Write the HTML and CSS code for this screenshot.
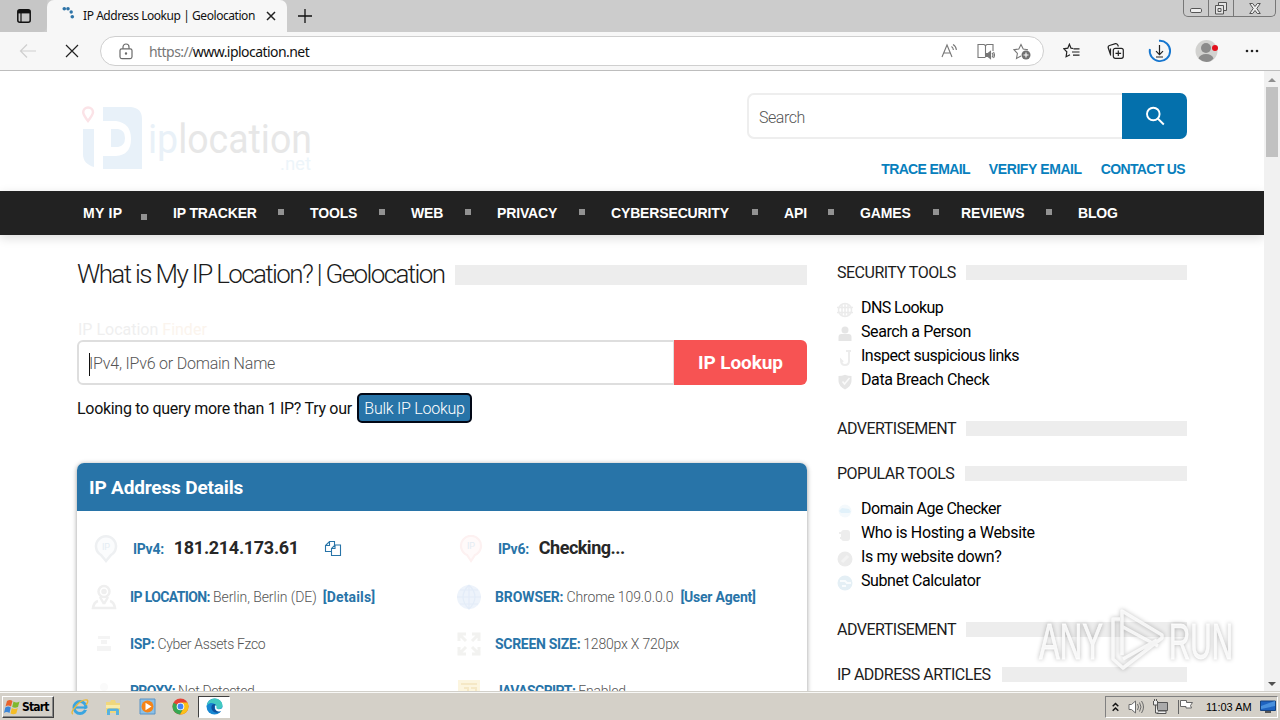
FILE: index.html
```html
<!DOCTYPE html>
<html lang="en">
<head>
<meta charset="utf-8">
<title>IP Address Lookup | Geolocation</title>
<link rel="stylesheet" href="styles.css">
</head>
<body>
<div class="tabbar">
  <div class="tab-actions"><svg width="16" height="16" viewBox="0 0 16 16"><rect x="1.8" y="1.8" width="12.4" height="12.4" rx="2" fill="none" stroke="#111" stroke-width="1.5"/><path d="M2 2h12v3.4H2z" fill="#111"/><path d="M5 5v9" stroke="#111" stroke-width="1.2"/></svg></div>
  <div class="tab">
    <svg class="spinner" width="14" height="14" viewBox="0 0 14 14" fill="#2e74a8"><circle cx="2.3" cy="1.8" r="1.8"/><circle cx="6" cy="1.8" r="1.8"/><circle cx="9.2" cy="5" r="1.7"/><circle cx="10.3" cy="9.8" r="1.8"/></svg>
    <span class="tab-title">IP Address Lookup | Geolocation</span>
    <svg class="tab-close" width="10" height="10" viewBox="0 0 10 10"><path d="M1 1l8 8M9 1L1 9" stroke="#222" stroke-width="1.5"/></svg>
  </div>
  <svg class="new-tab" width="14" height="14" viewBox="0 0 14 14"><path d="M7 0v14M0 7h14" stroke="#111" stroke-width="1.3"/></svg>
  <div class="window-buttons">
    <span class="wb wb-min"><svg width="12" height="5" viewBox="0 0 12 5"><rect x=".5" y=".5" width="11" height="4" rx="1.3" fill="#eee" stroke="#555"/></svg></span>
    <span class="wb wb-max"><svg width="14" height="13" viewBox="0 0 14 13" fill="#e4e4e4" stroke="#555"><path d="M4.5.5h8v8h-8z"/><path d="M1.500 3.500h8v8.500h-8z"/><path d="M4 6.500h3v3H4z"/></svg></span>
    <span class="wb wb-close"><svg width="12" height="11" viewBox="0 0 12 11"><path d="M.7.5h3L6 3.500 8.300.5h3L7.800 5.500l3.500 5h-3L6 7.500l-2.300 3h-3l3.500-5z" fill="#eee" stroke="#555"/></svg></span>
  </div>
</div>
<div class="toolbar">
  <svg class="back" width="18" height="16" viewBox="0 0 18 16"><path d="M17 8H1.500M8 1.500L1.500 8 8 14.500" fill="none" stroke="#cfcfcf" stroke-width="1.2"/></svg>
  <svg class="stop" width="14" height="14" viewBox="0 0 14 14"><path d="M1 1l12 12M13 1L1 13" stroke="#222" stroke-width="1.2"/></svg>
  <div class="address">
    <svg class="lock" width="14" height="17" viewBox="0 0 14 17" fill="none" stroke="#6a6a6a" stroke-width="1.2"><rect x="1" y="5.800" width="12" height="9.800" rx="1.800"/><path d="M4 5.800V4a3 3 0 0 1 6 0v1.800"/><circle cx="7" cy="10.500" r=".6" fill="#555"/></svg>
    <span class="url"><span class="scheme">https://</span>www.iplocation.net</span>
    <svg class="read" width="17" height="16" viewBox="0 0 17 16" fill="none" stroke="#777" stroke-width="1.100"><path d="M1 14L6 2l5 12M2.800 10h6.500M10.500 3.500c1.200.8 1.800 2 1.900 3.500M12 1.500c2 1.100 3.200 3 3.400 5.500"/></svg>
    <svg class="book" width="18" height="17" viewBox="0 0 18 17" fill="none" stroke="#777" stroke-width="1.100"><path d="M8.500 14.500H1V1.500h6l1.500 1 1.500-1h6V8M8.500 2.500V14"/><path d="M9.500 10.500h1.500l2.500-2v7l-2.500-2H9.500z" fill="#777"/><path d="M15 10c1 1 1 3 0 4.300M16.500 9c1.200 2 1.200 4.300 0 6"/></svg>
    <svg class="star" width="18" height="17" viewBox="0 0 18 17" fill="none" stroke="#777" stroke-width="1.100"><path d="M8 13l-4.500 2.400.9-4.900L1 6.700l4.800-.7L8 1.500 10.200 6l4.800.7"/><circle cx="13" cy="12" r="4.500" fill="#707070" stroke="none"/><path d="M13 9.500v5M10.500 12h5" stroke="#fff"/></svg>
  </div>
  <svg class="fav" width="18" height="16" viewBox="0 0 18 16" fill="none" stroke="#222" stroke-width="1.200"><path d="M10.200 5.500L8 5.200 6.400 1.200 4.800 5.200.8 5.800l3 3-.7 5 3.900-2M10.500 5.800h6M9 9h7.500M10 12.200h6.500"/></svg>
  <svg class="coll" width="18" height="17" viewBox="0 0 18 17" fill="none" stroke="#222" stroke-width="1.200"><rect x="6.300" y="5.300" width="10" height="10" rx="2"/><path d="M11.300 7.500v5.600M8.500 10.300h5.600M3.800 12.500L1.200 4.800Q.8 3 2.500 2.500l6-1.800Q10 .5 10.800 2l.6 1.500M3.500 11V5.500"/></svg>
  <svg class="down" width="24" height="24" viewBox="0 0 24 24" fill="none"><path d="M11 1.800A10.200 10.200 0 1 1 1.900 10" stroke="#1676cf" stroke-width="1.900"/><path d="M11.500 6v9.500M8 12.200l3.500 3.500 3.500-3.500M8 18h7" stroke="#222" stroke-width="1.200"/></svg>
  <svg class="avatar" width="24" height="24" viewBox="0 0 24 24"><circle cx="11.500" cy="12" r="11" fill="#d2d2d0"/><circle cx="11" cy="9" r="5" fill="#8b8b8b"/><path d="M3.500 19.500Q5 15 11 15t7.500 4.500Q15.500 23 11.500 23t-8-3.500z" fill="#8b8b8b"/><circle cx="20" cy="9" r="3" fill="#e3101c"/></svg>
  <svg class="dots" width="14" height="4" viewBox="0 0 14 4" fill="#222"><circle cx="2" cy="2" r="1.300"/><circle cx="7" cy="2" r="1.300"/><circle cx="12" cy="2" r="1.300"/></svg>
</div>
<div class="viewport">
  <div class="page">
    <header class="site-header">
      <svg class="logo" width="236" height="70" viewBox="0 0 236 70">
        <path d="M9 16C5.500 11.500 4.200 9.500 4.200 7.300a4.900 4.900 0 0 1 9.800 0C14 9.500 12.500 11.500 9 16z" fill="none" stroke="#fbe3e7" stroke-width="2.500"/>
        <path d="M4 24h11v38C8 60 4 56 4 49z" fill="#e8f1f9"/>
        <path d="M24 2h28q11 1 11 12v50H24V51h13q15-1 15-17T37 16H24z" fill="#e8f1f9"/>
        <path d="M32 24h7q7 1 7 9t-7 9h-7z" fill="#e8f1f9"/>
        <text x="69" y="48" class="logo-text" textLength="164" lengthAdjust="spacingAndGlyphs"><tspan fill="#e9f1f8">ip</tspan>location</text>
        <text x="201" y="65" class="logo-net" textLength="31" lengthAdjust="spacingAndGlyphs">.net</text>
      </svg>
      <div class="header-right">
        <div class="search"><span class="search-input">Search</span><span class="search-button"><svg width="20" height="20" viewBox="0 0 20 20" fill="none" stroke="#fff" stroke-width="1.900"><circle cx="8.300" cy="8" r="6.300"/><path d="M12.800 12.500l6 6"/></svg></span></div>
        <div class="top-links"><a>TRACE EMAIL</a><a class="verify">VERIFY EMAIL</a><a>CONTACT US</a></div>
      </div>
    </header>
    <ul class="nav">
      <li class="low">MY IP</li><li>IP TRACKER</li><li>TOOLS</li><li>WEB</li><li>PRIVACY</li><li>CYBERSECURITY</li><li>API</li><li class="near">GAMES</li><li>REVIEWS</li><li class="last">BLOG</li>
    </ul>
    <div class="columns">
      <main>
        <h1><span>What is My IP Location? | Geolocation</span></h1>
        <div class="finder-label">IP Location <span>Finder</span></div>
        <div class="finder"><span class="finder-input">IPv4, IPv6 or Domain Name</span><span class="finder-button">IP Lookup</span></div>
        <div class="bulk"><span class="bulk-text">Looking to query more than 1 IP? Try our</span><a class="bulk-button">Bulk IP Lookup</a></div>
        <section class="card">
          <h2>IP Address Details</h2>
          <div class="details">
            <div class="row first">
              <svg class="ic" width="26" height="28" viewBox="0 0 26 28"><path d="M13 26l-5-6a10 10 0 1 1 10 0z" fill="#fbfcfd" stroke="#eef0f2" stroke-width="2.500"/><text x="13" y="15" text-anchor="middle" class="pin-text">IP</text></svg>
              <b class="v">IPv4:</b><strong class="ipnum">181.214.173.61</strong>
              <svg class="copy" width="18" height="17" viewBox="0 0 18 17" fill="none" stroke="#2874a8" stroke-width="1.100"><path d="M7 11.500H1.500V5.500l4-4h5V5M5.500 1.500v4h-4M7.500 15.500V8.500l3.500-3.500h5.500v10.500zM11 5v3.500H7.500"/></svg>
            </div>
            <div class="row first">
              <svg class="ic" width="26" height="28" viewBox="0 0 26 28"><path d="M13 26l-4-6a10 10 0 1 1 8 0z" fill="#fffafa" stroke="#fdf1f1" stroke-width="2.200"/><text x="13" y="14" text-anchor="middle" class="pin-text">IP</text></svg>
              <b class="v">IPv6:</b><strong class="checking">Checking...</strong>
            </div>
            <div class="row"><svg class="ic" width="26" height="26" viewBox="0 0 26 26" fill="none" stroke="#efefef" stroke-width="2.500"><circle cx="13" cy="7.500" r="5.500"/><circle cx="13" cy="7.500" r="1.500"/><path d="M13 20l-4-7M13 20l4-7M7 17q-4 1-5 7h22q-1-6-5-7"/></svg><b class="iploc">IP LOCATION:</b><span class="val loc">Berlin, Berlin (DE)</span><b class="lnk">[Details]</b></div>
            <div class="row"><svg class="ic" width="26" height="26" viewBox="0 0 26 26"><circle cx="13" cy="13" r="12" fill="#edf3fb"/><path d="M1 13h24M13 1v24M4 6h18M4 20h18M13 1Q1 13 13 25Q25 13 13 1" fill="none" stroke="#e3ecf8" stroke-width="1.200"/></svg><b class="br">BROWSER:</b><span class="val chrome">Chrome 109.0.0.0</span><b class="lnk ua">[User Agent]</b></div>
            <div class="row"><svg class="ic" width="26" height="26" viewBox="0 0 26 26" fill="#f4f4f4"><path d="M7 5h12v3H7zM10 9h6v4h-6zM6 15h14v5H6z"/></svg><b>ISP:</b><span class="val isp">Cyber Assets Fzco</span></div>
            <div class="row"><svg class="ic" width="26" height="26" viewBox="0 0 26 26" fill="none" stroke="#f2f2f0" stroke-width="3"><path d="M3 10V3h7M3 3l7 7M16 3h7v7M23 3l-7 7M3 16v7h7M3 23l7-7M23 16v7h-7M23 23l-7-7"/></svg><b class="ss">SCREEN SIZE:</b><span class="val size">1280px X 720px</span></div>
            <div class="row"><svg class="ic" width="26" height="26" viewBox="0 0 26 26" fill="#fafafa"><circle cx="13" cy="9" r="4"/><path d="M6 14h14v8H6z"/></svg><b class="proxy">PROXY:</b><span class="val isp">Not Detected</span></div>
            <div class="row"><svg class="ic" width="26" height="26" viewBox="0 0 26 26"><path d="M2 2h22v22H2z" fill="#fcf5df"/><path d="M5 6h16M8 10h4v8M15 10h5v4h-5v5h5" fill="none" stroke="#f5e8c6" stroke-width="2"/></svg><b class="iploc">JAVASCRIPT:</b><span class="val">Enabled</span></div>
          </div>
        </section>
      </main>
      <aside>
        <h3 class="s1"><span>SECURITY TOOLS</span></h3>
        <ul class="links">
          <li><svg width="16" height="16" viewBox="0 0 16 16" fill="none" stroke="#ebebeb" stroke-width="1.500"><circle cx="8" cy="8" r="6.500"/><path d="M0 5.500h16M0 10.500h16M8 1v14M5 2v12M11 2v12"/></svg><span class="l1">DNS Lookup</span></li>
          <li><svg width="16" height="16" viewBox="0 0 16 16" fill="#e5e5e5"><circle cx="8" cy="4" r="3.500"/><path d="M1.500 15v-4q0-3 3-3h7q3 0 3 3v4z"/></svg><span class="l2">Search a Person</span></li>
          <li><svg width="16" height="16" viewBox="0 0 16 16" fill="none" stroke="#ececec" stroke-width="2"><path d="M12 1v10q0 4-4 4t-4-5l2 2M9 1h5"/></svg><span class="l3">Inspect suspicious links</span></li>
          <li><svg width="16" height="16" viewBox="0 0 16 16"><path d="M1.500 2Q5 2 8 .8 11 2 14.500 2v5q0 5-6.500 8.500Q1.500 12 1.500 7z" fill="#e5e5e5"/><path d="M5.500 7.500l2 2.500 5-6" fill="none" stroke="#fafafa" stroke-width="1.500"/></svg><span class="l4">Data Breach Check</span></li>
        </ul>
        <h3 class="s2"><span>ADVERTISEMENT</span></h3>
        <h3 class="s3"><span>POPULAR TOOLS</span></h3>
        <ul class="links">
          <li><svg width="16" height="16" viewBox="0 0 16 16"><circle cx="8" cy="8" r="6.500" fill="#f4f9fc"/><path d="M2 8l3-3 7 1 2 3-2 1H4z" fill="#e1f1fa"/></svg><span class="l3">Domain Age Checker</span></li>
          <li><svg width="16" height="16" viewBox="0 0 16 16" fill="#ededed"><rect x="4" y="3" width="9" height="11" rx="3"/><path d="M2 5h4v2H2zM3 10h3v2H3z"/></svg><span class="p2">Who is Hosting a Website</span></li>
          <li><svg width="16" height="16" viewBox="0 0 16 16"><circle cx="8" cy="8" r="7.500" fill="#ebebeb"/><path d="M5 11l6-6" stroke="#f3f3f3" stroke-width="3"/></svg><span class="p3">Is my website down?</span></li>
          <li><svg width="16" height="16" viewBox="0 0 16 16"><circle cx="8" cy="8" r="7.500" fill="#e4eff5"/><path d="M3 6h5l2 2h4M5 11h4" stroke="#f9fcfd" stroke-width="2"/></svg><span class="p4">Subnet Calculator</span></li>
        </ul>
        <h3 class="s4"><span>ADVERTISEMENT</span></h3>
        <h3 class="s5"><span>IP ADDRESS ARTICLES</span></h3>
      </aside>
    </div>
  </div>
  <div class="scrollbar"><span class="up"></span><span class="thumb"></span><span class="dn"></span></div>
  <svg class="watermark" width="204" height="72" viewBox="0 0 204 72">
    <g class="wm">
      <text x="5" y="56" textLength="64" lengthAdjust="spacingAndGlyphs">ANY</text>
      <text x="135" y="56" textLength="64" lengthAdjust="spacingAndGlyphs">RUN</text>
      <path d="M86 16H79V56L89 65 128 35V32L88 8V52M89 24L124 43M89 56L123 37"/>
    </g>
  </svg>
</div>
<div class="taskbar">
  <div class="start"><svg width="17" height="16" viewBox="0 0 17 16"><path d="M3 2q3-2 5.500 0L7 7.500q-3-2-5.500 0z" fill="#e8632c"/><path d="M9.500 2.500q3 1.800 6 0L14 8q-3 1.500-5.800 0z" fill="#7fb82c"/><path d="M1.300 8.500q3-2 5.500 0L5.500 14q-3-2-5.500 0z" fill="#3c86d8"/><path d="M7.800 9q3 1.800 6 0l-1.500 5.500q-3 1.500-5.800 0z" fill="#f5bd26"/></svg>Start</div>
  <svg class="app ie" width="18" height="18" viewBox="0 0 18 18" fill="none"><circle cx="9" cy="9.500" r="6" stroke="#3aa5e0" stroke-width="3"/><path d="M4 9.500h10" stroke="#3aa5e0" stroke-width="2.200"/><path d="M12 12h5v-2z" fill="#d4d0c8"/><path d="M2 16Q-1 15 5 8T16 2q2 1-1 5" stroke="#e9b93c" stroke-width="1.400"/></svg>
  <svg class="app folder" width="18" height="18" viewBox="0 0 18 18"><path d="M2 4h4l1-2h4l1 3h4v10H2z" fill="#f0d77c"/><path d="M2 7h14v3H2z" fill="#f9eba8"/><path d="M3 17v-5q0-1.500 2-1.500h8q2 0 2 1.500v5h-3v-4H6v4z" fill="#58b2df"/></svg>
  <svg class="app wmp" width="17" height="17" viewBox="0 0 17 17"><path d="M1 1h15v15H1z" fill="#8cc0e6" stroke="#5a94c6"/><circle cx="8.500" cy="8.500" r="6" fill="#f58418"/><path d="M6.500 4.800l6 3.700-6 3.700z" fill="#fff"/></svg>
  <svg class="app chromeic" width="17" height="17" viewBox="0 0 17 17"><circle cx="8.500" cy="8.500" r="8" fill="#e54335"/><path d="M8.500 8.500L1.500 4.700A8 8 0 0 0 8 16.500l3.500-6z" fill="#36a852"/><path d="M8.500 4.500h6.900A8 8 0 0 1 8 16.500l3.500-6z" fill="#fbc116"/><circle cx="8.500" cy="8.500" r="3.800" fill="#fff"/><circle cx="8.500" cy="8.500" r="2.900" fill="#4285f4"/></svg>
  <div class="active"><svg width="17" height="17" viewBox="0 0 17 17"><circle cx="8.500" cy="8.500" r="8" fill="#1687d2"/><path d="M.7 8Q2 .7 9 .5q6.500.5 7.500 6.500 0 4-4 4-3 0-2-2Q9 4.500 4.500 5 2 5.500.7 8z" fill="#43c9c1"/><path d="M6 7q-2 4 2 7 4 2 7-1-3 1-5-.5T8.500 8.500q0-2 1.500-2-2-1-4 .5z" fill="#0d4f9c"/><path d="M9 7.500q2 0 1.500 1.800-.6 1.700 2 2 2 0 4.500-1.500l-.5 3q-4 1.500-6 0Q8.500 11 9 7.500z" fill="#fff"/></svg></div>
  <div class="tray">
    <svg class="chev" width="7" height="10" viewBox="0 0 7 10" fill="none" stroke="#111" stroke-width="1.500"><path d="M.7 4.200l2.800-2.700 2.800 2.700M.7 8.700L3.500 6l2.800 2.700"/></svg>
    <svg class="vol" width="17" height="14" viewBox="0 0 17 14" fill="#fff" stroke="#6b6b6b"><path d="M1 4.500h2.500L7.500 1v12L3.500 9.500H1z"/><path d="M9.500 4q2 3 0 6M11.500 2.500q3 4.500 0 9M13.500 1q4 6 0 12" fill="none"/></svg>
    <svg class="net" width="17" height="16" viewBox="0 0 17 16" fill="#eee" stroke="#555"><path d="M5.500 3.500h10v8h-10z" fill="#aaa"/><path d="M7 12h7v2.500H5v-2z"/><path d="M1.500 2v4h4V2M2.500 0v2M4.500 0v2M3.500 6v8h3"/></svg>
    <svg class="flag" width="17" height="15" viewBox="0 0 17 15" fill="#fff" stroke="#666"><path d="M1.500 1v14M3.500 1.500h6v2h6l-2 3 1 2.500H9V7.500H3.500z"/></svg>
    <span class="clock">11:03 AM</span>
    <svg class="desk" width="16" height="14" viewBox="0 0 16 14"><path d="M.5 1h15v9.500H.5z" fill="#1f63c0" stroke="#16437f"/><path d="M1 6l14-5v5L1 9z" fill="#4990dd"/><path d="M5 12h6" stroke="#555" stroke-width="2"/></svg>
  </div>
</div>
</body>
</html>
```
FILE: styles.css
```css
* { box-sizing: border-box; }
body { margin: 0; width: 1280px; height: 720px; overflow: hidden; font-family: Roboto, "Open Sans", sans-serif; background: #fff; color: #222; display: flex; flex-direction: column; }
svg { display: block; flex: none; }
ul { list-style: none; margin: 0; padding: 0; }
h1, h2, h3 { margin: 0; font-weight: 400; }
span, a, b, strong { white-space: nowrap; }

.tabbar { height: 32px; flex: none; display: flex; align-items: flex-start; background: #cccccc; }
.tab-actions { width: 47px; height: 32px; padding: 8px 0 0 16px; background: #c6c6c6; border-radius: 0 0 6px 0; }
.tab { width: 240px; height: 32px; display: flex; align-items: center; background: #f7f7f7; border-radius: 7px 7px 0 0; padding: 0 11px 0 15px; }
.tab-title { width: 172px; margin-left: 7px; padding-bottom: 1px; font: 12px "Noto Sans", sans-serif; color: #111; letter-spacing: -.44px; }
.spinner { margin-top: -4px; }
.tab-close { margin-left: 11px; }
.new-tab { margin: 9px 0 0 11px; }
.window-buttons { margin-left: auto; margin-right: 4px; display: flex; height: 17px; border: 1px solid #777; border-top: 0; border-radius: 0 0 5px 5px; }
.wb { display: flex; justify-content: center; align-items: center; border-right: 1px solid #777; }
.wb-min { width: 25px; padding-top: 5px; }
.wb-max { width: 25px; }
.wb-close { width: 41px; border: 0; }

.toolbar { height: 39px; flex: none; background: #f7f7f7; border-bottom: 1px solid #bdbdbd; display: flex; align-items: center; padding-left: 19px; }
.stop { margin-left: 28px; }
.address { margin-left: 21px; width: 944px; height: 30px; border: 1px solid #cfcfcf; border-radius: 15px; background: #fff; display: flex; align-items: center; padding-left: 18px; }
.url { margin-left: 16px; width: 792px; font: 14px "Noto Sans", sans-serif; letter-spacing: -.55px; color: #111; }
.scheme { color: #777; }
.book { margin-left: 19px; }
.star { margin-left: 18px; }
.fav { margin-left: 19px; }
.coll { margin-left: 26px; }
.down { margin-left: 23px; }
.avatar { margin-left: 23px; }
.dots { margin-left: 26px; }

.viewport { position: relative; height: 621px; flex: none; display: flex; overflow: hidden; }
.page { width: 1264px; height: 621px; overflow: hidden; }
.scrollbar { width: 16px; background: #f1f1f1; display: flex; flex-direction: column; align-items: center; padding: 7px 0 6px; }
.up { border: 4px solid transparent; border-top: 0; border-bottom: 4px solid #8f8f8f; }
.thumb { width: 12px; height: 70px; margin-top: 5px; background: #c1c1c1; }
.dn { margin-top: auto; border: 4px solid transparent; border-bottom: 0; border-top: 4px solid #505050; }

.site-header { height: 120px; padding: 22px 77px 0 79px; display: flex; justify-content: space-between; }
.logo { margin-top: 12px; overflow: visible; }
.logo-text { font: 40px Roboto, sans-serif; fill: #e7e7e7; }
.logo-net { font: 18px Roboto, sans-serif; fill: #edf5fa; }
.header-right { width: 440px; }
.search { height: 46px; display: flex; }
.search-input { width: 375px; border: 2px solid #eeeeee; border-right: 0; border-radius: 7px 0 0 7px; padding-left: 10px; line-height: 45px; font-size: 16px; font-weight: 300; color: #555; letter-spacing: -.45px; }
.search-button { width: 65px; background: #0470ac; border-radius: 0 7px 7px 0; display: flex; justify-content: center; align-items: center; }
.top-links { display: flex; justify-content: flex-end; gap: 19px; padding: 22px 2px 0 0; font: bold 14px/16px "Liberation Sans", Arial, sans-serif; color: #087fbd; letter-spacing: -.65px; }
.verify { letter-spacing: -.4px; }

.nav { height: 44px; padding-left: 83px; background: #222; color: #fff; display: grid; grid-template-columns: 90px 137px 101px 86px 114px 173px 76px 101px 117px 60px; font: bold 14px/44px "Liberation Sans", Arial, sans-serif; letter-spacing: -.15px; box-shadow: 0 3px 10px rgba(0,0,0,.14); }
.nav li { display: flex; justify-content: space-between; align-items: flex-start; padding-right: 26px; white-space: nowrap; }
.nav li::after { content: ""; width: 6px; height: 6px; margin-top: 18px; background: #929292; }
.nav .low { letter-spacing: .3px; }
.nav .low::after { margin-top: 23px; }
.nav .near { padding-right: 22px; }
.nav .last::after { display: none; }

.columns { padding-left: 77px; display: flex; gap: 30px; }
main { width: 730px; }
h1 { height: 36px; margin-top: 22px; display: flex; align-items: center; gap: 10px; font-size: 26px; font-weight: 300; line-height: 34px; color: #1c1c1c; }
h1 span { width: 368px; padding-bottom: 2px; letter-spacing: -1.63px; }
h1::after { content: ""; flex: 1; height: 20px; background: #ededed; }
.finder-label { margin-top: 26px; height: 20px; padding-left: 1px; font-size: 16px; line-height: 21px; color: #efefef; }
.finder-label span { color: #fbf4ed; }
.finder { height: 45px; margin-top: 1px; display: flex; }
.finder-input { width: 597px; border: 2px solid #dedede; border-right-width: 1px; border-radius: 6px 0 0 6px; padding-left: 10px; font-size: 16px; font-weight: 300; line-height: 43px; color: #555; letter-spacing: -.22px; }
.finder-input::before { content: ""; display: inline-block; width: 1px; height: 23px; margin-right: -1px; vertical-align: middle; background: #111; }
.finder-button { width: 133px; background: #f75353; color: #fff; font-weight: 700; font-size: 19px; line-height: 46px; text-align: center; letter-spacing: -.1px; border-radius: 0 6px 6px 0; }
.bulk { margin-top: 8px; height: 30px; display: flex; align-items: center; font-size: 16px; color: #111; }
.bulk-text { width: 280px; letter-spacing: -.3px; }
.bulk-button { width: 115px; height: 30px; border: 2px solid #020816; border-radius: 5px; background: #2874a8; color: #fff; line-height: 27px; text-align: center; font-weight: 300; letter-spacing: -.25px; }
.card { margin-top: 40px; height: 300px; border-radius: 7px 7px 0 0; background: #fff; box-shadow: 0 1px 5px rgba(0,0,0,.4); overflow: hidden; }
h2 { height: 48px; background: #2874a8; color: #fff; padding-left: 12px; font-size: 19px; font-weight: 700; line-height: 49px; letter-spacing: -.16px; }
.details { display: grid; grid-template-columns: 365px 365px; grid-template-rows: 49px 48px 46px 48px; padding-top: 13px; font-size: 14px; }
.row { display: flex; align-items: center; padding-left: 14px; }
.row b { margin-left: 13px; color: #2874a8; font-weight: 700; letter-spacing: -.3px; }
.row .iploc { letter-spacing: -.62px; }
.row .br { letter-spacing: -.1px; }
.row .proxy { letter-spacing: -.65px; }
.val { margin-left: 3px; color: #555; font-weight: 300; letter-spacing: -.2px; }
.loc { letter-spacing: -.05px; }
.chrome { letter-spacing: -.12px; }
.isp { letter-spacing: -.35px; }
.row .lnk { margin-left: 6px; letter-spacing: .15px; }
.row .ua { letter-spacing: -.2px; margin-left: 7px; }
.first { padding-left: 16px; }
.first b { margin-left: 14px; }
.ipnum, .checking { margin-left: 10px; font-size: 18px; line-height: 20px; color: #272727; padding-bottom: 1px; }
.ipnum { letter-spacing: -.3px; }
.checking { letter-spacing: -.5px; }
.copy { margin-left: 25px; }
.pin-text { font: 9px Roboto, sans-serif; fill: #e4ecf3; }

aside { width: 350px; padding-top: 27px; }
h3 { display: flex; align-items: center; gap: 10px; height: 20px; font-size: 16px; line-height: 20px; color: #1c1c1c; }
h3 span { letter-spacing: -.5px; padding-top: 1px; }
h3::after { content: ""; flex: 1; height: 15px; background: #ededed; }
.links { padding-top: 14px; }
.links li { height: 24px; display: flex; align-items: center; gap: 8px; font-size: 16px; line-height: 24px; color: #000; letter-spacing: -.4px; }
.links svg { margin-top: 3px; }
.links .l1 { letter-spacing: -.6px; }
.links .l3 { letter-spacing: -.5px; }
.links .p2 { letter-spacing: -.34px; }
.s1 span, .s2 span, .s4 span { width: 119px; }
.s3 span { width: 118px; }
.s5 span { width: 155px; }
.s2 { margin-top: 26px; }
.s3 { margin-top: 25px; }
.s4 { margin-top: 26px; }
.s5 { margin-top: 25px; }

.watermark { position: absolute; left: 1034px; top: 532px; }
.wm { font: 50px "Liberation Sans", sans-serif; fill: #fff; fill-opacity: .85; stroke: #fff; stroke-opacity: .8; stroke-width: .8px; filter: drop-shadow(0 0 2px rgba(0,0,0,.32)); }
.wm path { fill: none; stroke-width: 3.500px; stroke-linejoin: round; }

.taskbar { height: 28px; flex: none; position: relative; background: #d4d0c8; border-top: 1px solid #f8f8f6; box-shadow: 0 -1px 0 #d2d0ca; display: flex; align-items: center; padding-left: 2px; }
.start { width: 52px; height: 22px; margin-top: 1px; border: 1px solid; border-color: #fff #404040 #404040 #fff; box-shadow: inset -1px -1px #888; display: flex; align-items: center; gap: 1px; padding-left: 1px; font: bold 12px "DejaVu Sans Condensed", "DejaVu Sans", sans-serif; letter-spacing: -.8px; color: #000; }
.ie { margin-left: 17px; }
.folder { margin-left: 15px; }
.wmp { margin-left: 17px; }
.chromeic { margin-left: 16px; }
.active { width: 32px; height: 22px; margin-left: 9px; background: #fff; border: 1px solid; border-color: #404040 #fff #fff #404040; display: flex; align-items: center; justify-content: center; }
.tray { margin-left: auto; margin-right: 2px; width: 173px; height: 22px; border: 1px solid; border-color: #808080 #fff #fff #808080; display: flex; align-items: center; padding-left: 6px; }
.vol { margin-left: 9px; }
.net { margin-left: 7px; }
.flag { margin-left: 8px; }
.clock { width: 47px; margin-left: 12px; font: 11px "Liberation Sans", sans-serif; color: #000; }
.desk { margin-left: 7px; }
```
